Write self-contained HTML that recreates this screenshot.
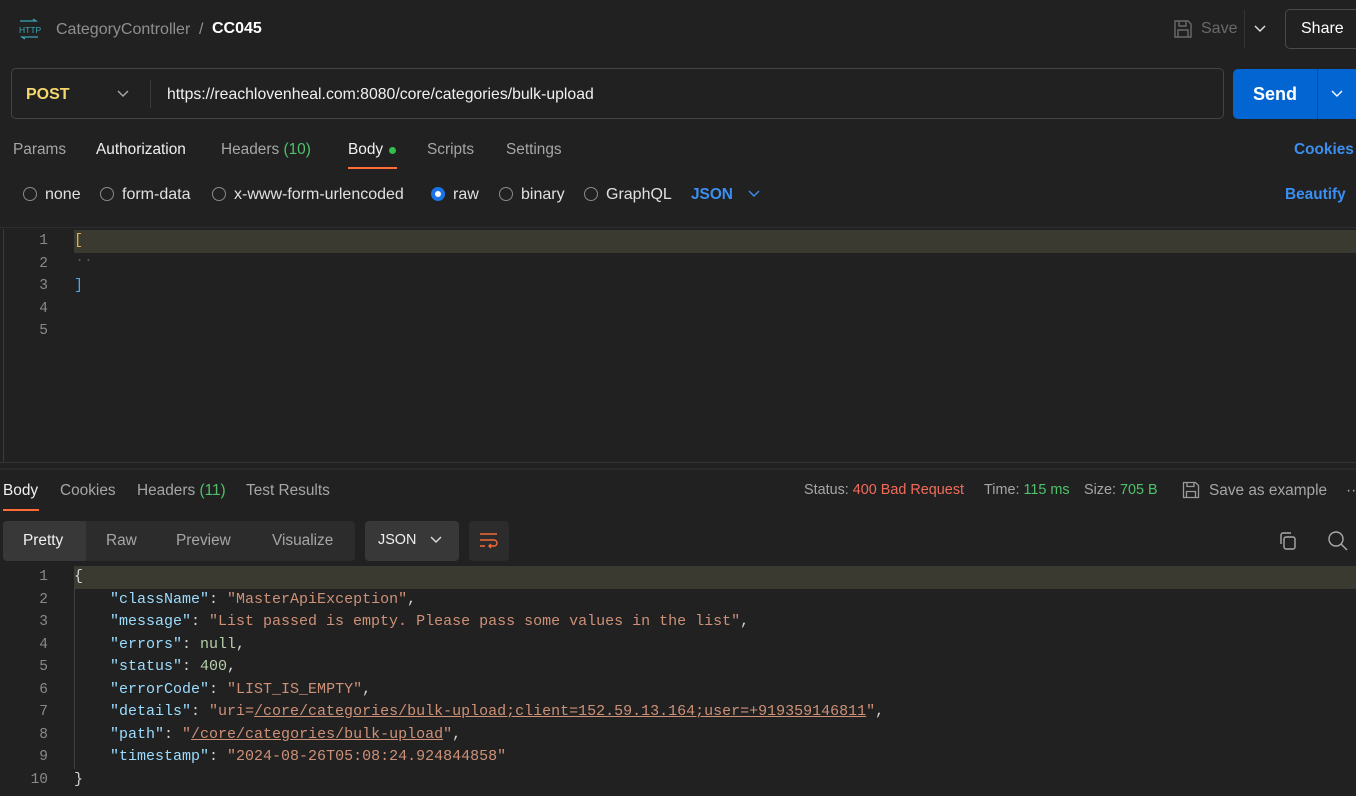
<!DOCTYPE html>
<html><head><meta charset="utf-8"><style>
*{box-sizing:border-box;margin:0;padding:0}
body{width:1356px;height:796px;background:#212121;font-family:"Liberation Sans",sans-serif;color:#e0e0e0;position:relative;overflow:hidden;font-size:15.4px}
.a{position:absolute;white-space:nowrap}
.g{color:#a6a6a6}
.mono{font-family:"Liberation Mono",monospace;font-size:15px}
.ln{position:absolute;width:48px;text-align:right;color:#8a8a8a;font-family:"Liberation Mono",monospace;font-size:14.5px}
.k{color:#9cdcfe}.s{color:#ce9178}.n{color:#b5cea8}.p{color:#d4d4d4}
.rd{font-size:16px}
.radio{display:inline-block;width:14px;height:14px;border:1px solid #8a8a8a;border-radius:50%;vertical-align:-2px;margin-right:8px}
</style></head><body>
<svg class="a" style="left:17px;top:18px" width="24" height="22" viewBox="0 0 24 22"><path d="M3 3h16l-3-2M21 19H5l3 2" stroke="#3aa6b9" fill="none" stroke-width="1.3"/><text x="2" y="15" font-size="8.5" fill="#3aa6b9" font-family="Liberation Sans">HTTP</text></svg>
<div class="a" style="left:56px;top:21px;font-size:16px;color:#8f8f8f">CategoryController</div>
<div class="a" style="left:199px;top:21px;font-size:16px;color:#8f8f8f">/</div>
<div class="a" style="left:212px;top:20px;font-size:16px;font-weight:bold;color:#fff">CC045</div>
<svg class="a" style="left:1173px;top:19px" width="20" height="20" viewBox="0 0 20 20"><path d="M2 2h13l3 3v13H2zM6 2v5h7V2M5 18v-7h10v7" stroke="#6a6a6a" fill="none" stroke-width="1.4"/></svg>
<div class="a" style="left:1201px;top:20px;font-size:16px;color:#6a6a6a">Save</div>
<div class="a" style="left:1244px;top:10px;width:1px;height:38px;background:#333"></div>
<svg class="a" style="left:1253px;top:24px" width="14" height="10"><path d="M2 2l5 5 5-5" stroke="#ddd" fill="none" stroke-width="1.5"/></svg>
<div class="a" style="left:1285px;top:9px;width:80px;height:40px;border:1px solid #4a4a4a;border-radius:5px"></div>
<div class="a" style="left:1301px;top:20px;font-size:16px;color:#fff">Share</div>
<div class="a" style="left:11px;top:68px;width:1213px;height:51px;border:1px solid #444;border-radius:5px"></div>
<div class="a" style="left:150px;top:80px;width:1px;height:28px;background:#3a3a3a"></div>
<div class="a" style="left:26px;top:86px;font-size:16px;font-weight:bold;color:#f5d76e">POST</div>
<svg class="a" style="left:116px;top:89px" width="14" height="10"><path d="M2 2l5 5 5-5" stroke="#aaa" fill="none" stroke-width="1.4"/></svg>
<div class="a" style="left:167px;top:86px;font-size:15.8px;color:#f0f0f0">https://reachlovenheal.com:8080/core/categories/bulk-upload</div>
<div class="a" style="left:1233px;top:69px;width:130px;height:50px;background:#0265d2;border-radius:5px"></div>
<div class="a" style="left:1317px;top:69px;width:1px;height:50px;background:#0150a8"></div>
<div class="a" style="left:1253px;top:84px;font-size:18px;font-weight:bold;color:#fff">Send</div>
<svg class="a" style="left:1330px;top:89px" width="14" height="10"><path d="M2 2l5 5 5-5" stroke="#fff" fill="none" stroke-width="1.4"/></svg>
<div class="a g" style="left:13px;top:141px">Params</div>
<div class="a" style="left:96px;top:141px;color:#f0f0f0">Authorization</div>
<div class="a g" style="left:221px;top:141px">Headers <span style="color:#4fc16d">(10)</span></div>
<div class="a" style="left:348px;top:141px;color:#f0f0f0">Body</div>
<div class="a" style="left:389px;top:147px;width:7px;height:7px;border-radius:50%;background:#2fbf4f"></div>
<div class="a" style="left:348px;top:167px;width:49px;height:2px;background:#ff6c37"></div>
<div class="a g" style="left:427px;top:141px">Scripts</div>
<div class="a g" style="left:506px;top:141px">Settings</div>
<div class="a" style="left:1294px;top:141px;color:#3b8ff0;font-weight:bold">Cookies</div>
<div class="a rd" style="left:23px;top:186px"><span class="radio"></span>none</div>
<div class="a rd" style="left:100px;top:186px"><span class="radio"></span>form-data</div>
<div class="a rd" style="left:212px;top:186px"><span class="radio"></span>x-www-form-urlencoded</div>
<div class="a rd" style="left:431px;top:186px"><span class="radio" style="border:4px solid #1a73e8;background:#fff"></span>raw</div>
<div class="a rd" style="left:499px;top:186px"><span class="radio"></span>binary</div>
<div class="a rd" style="left:584px;top:186px"><span class="radio"></span>GraphQL</div>
<div class="a" style="left:691px;top:186px;color:#3b8ff0;font-weight:bold">JSON</div>
<svg class="a" style="left:747px;top:189px" width="14" height="10"><path d="M2 2l5 5 5-5" stroke="#3b8ff0" fill="none" stroke-width="1.4"/></svg>
<div class="a" style="left:1285px;top:186px;color:#3b8ff0;font-weight:bold">Beautify</div>
<div class="a" style="left:0;top:227px;width:1356px;height:1px;background:#2e2e2e"></div>
<div class="a" style="left:3px;top:229px;width:1px;height:234px;background:#3a3a3a"></div>
<div class="a" style="left:0;top:462px;width:1356px;height:1px;background:#333"></div>
<div class="a" style="left:74px;top:230px;width:1282px;height:23px;background:#3b3a30"></div>
<div class="ln" style="left:0;top:233px">1</div>
<div class="ln" style="left:0;top:256px">2</div>
<div class="ln" style="left:0;top:278px">3</div>
<div class="ln" style="left:0;top:301px">4</div>
<div class="ln" style="left:0;top:323px">5</div>
<div class="a mono" style="left:74px;top:232px;color:#e0b040">[</div>
<div class="a mono" style="left:75px;top:252px;color:#555">··</div>
<div class="a mono" style="left:74px;top:277px;color:#4aa8e8">]</div>
<div class="a" style="left:0;top:468px;width:1356px;height:2px;background:#2a2a2a"></div>
<div class="a" style="left:3px;top:482px;color:#f0f0f0">Body</div>
<div class="a" style="left:3px;top:509px;width:36px;height:2px;background:#ff6c37"></div>
<div class="a g" style="left:60px;top:482px">Cookies</div>
<div class="a g" style="left:137px;top:482px">Headers <span style="color:#4fc16d">(11)</span></div>
<div class="a g" style="left:246px;top:482px">Test Results</div>
<div class="a g" style="left:804px;top:482px;font-size:14.4px">Status: <span style="color:#f26b5b">400 Bad Request</span></div>
<div class="a g" style="left:984px;top:482px;font-size:14.4px">Time: <span style="color:#4fc16d">115 ms</span></div>
<div class="a g" style="left:1084px;top:482px;font-size:14.4px">Size: <span style="color:#4fc16d">705 B</span></div>
<svg class="a" style="left:1182px;top:481px" width="18" height="18" viewBox="0 0 18 18"><path d="M1.5 1.5h12l3 3v12h-15zM5 1.5v4h7v-4M4.5 16.5v-6h9v6" stroke="#9a9a9a" fill="none" stroke-width="1.3"/></svg>
<div class="a g" style="left:1209px;top:482px">Save as example</div>
<div class="a g" style="left:1346px;top:482px">··</div>
<div class="a" style="left:3px;top:521px;width:352px;height:40px;background:#2c2c2c;border-radius:4px"></div>
<div class="a" style="left:3px;top:521px;width:83px;height:40px;background:#383838;border-radius:4px 0 0 4px"></div>
<div class="a" style="left:23px;top:532px;color:#f0f0f0">Pretty</div>
<div class="a g" style="left:106px;top:532px">Raw</div>
<div class="a g" style="left:176px;top:532px">Preview</div>
<div class="a g" style="left:272px;top:532px">Visualize</div>
<div class="a" style="left:365px;top:521px;width:94px;height:40px;background:#383838;border-radius:4px"></div>
<div class="a" style="left:378px;top:532px;font-size:14.4px;color:#f0f0f0">JSON</div>
<svg class="a" style="left:429px;top:535px" width="14" height="10"><path d="M2 2l5 5 5-5" stroke="#ddd" fill="none" stroke-width="1.4"/></svg>
<div class="a" style="left:469px;top:521px;width:40px;height:40px;background:#2c2c2c;border-radius:4px"></div>
<svg class="a" style="left:478px;top:530px" width="22" height="22" viewBox="0 0 22 22"><path d="M2 4h17M2 10h14a3 3 0 010 6h-5M13 14l-2 2 2 2M2 16h5" stroke="#f26b3a" fill="none" stroke-width="1.4"/></svg>
<svg class="a" style="left:1278px;top:531px" width="20" height="20" viewBox="0 0 20 20"><rect x="6" y="6" width="11" height="12" rx="2" stroke="#aaa" fill="none" stroke-width="1.4"/><path d="M3 13V4a2 2 0 012-2h8" stroke="#aaa" fill="none" stroke-width="1.4"/></svg>
<svg class="a" style="left:1327px;top:530px" width="22" height="22" viewBox="0 0 22 22"><circle cx="9" cy="9" r="7" stroke="#aaa" fill="none" stroke-width="1.4"/><path d="M14 14l6 6" stroke="#aaa" stroke-width="1.4"/></svg>
<div class="a" style="left:74px;top:566px;width:1282px;height:23px;background:#3b3a30"></div>
<div class="a" style="left:74px;top:589px;width:1px;height:180px;background:#404040"></div>
<div class="ln" style="left:0;top:569px">1</div>
<div class="ln" style="left:0;top:592px">2</div>
<div class="ln" style="left:0;top:614px">3</div>
<div class="ln" style="left:0;top:637px">4</div>
<div class="ln" style="left:0;top:659px">5</div>
<div class="ln" style="left:0;top:682px">6</div>
<div class="ln" style="left:0;top:704px">7</div>
<div class="ln" style="left:0;top:727px">8</div>
<div class="ln" style="left:0;top:749px">9</div>
<div class="ln" style="left:0;top:772px">10</div>
<div class="a mono p" style="left:74px;top:568px">{</div>
<div class="a mono p" style="left:110px;top:591px"><span class="k">"className"</span>: <span class="s">"MasterApiException"</span>,</div>
<div class="a mono p" style="left:110px;top:613px"><span class="k">"message"</span>: <span class="s">"List passed is empty. Please pass some values in the list"</span>,</div>
<div class="a mono p" style="left:110px;top:636px"><span class="k">"errors"</span>: <span class="n">null</span>,</div>
<div class="a mono p" style="left:110px;top:658px"><span class="k">"status"</span>: <span class="n">400</span>,</div>
<div class="a mono p" style="left:110px;top:681px"><span class="k">"errorCode"</span>: <span class="s">"LIST_IS_EMPTY"</span>,</div>
<div class="a mono p" style="left:110px;top:703px"><span class="k">"details"</span>: <span class="s">"uri=<u>/core/categories/bulk-upload;client=152.59.13.164;user=+919359146811</u>"</span>,</div>
<div class="a mono p" style="left:110px;top:726px"><span class="k">"path"</span>: <span class="s">"<u>/core/categories/bulk-upload</u>"</span>,</div>
<div class="a mono p" style="left:110px;top:748px"><span class="k">"timestamp"</span>: <span class="s">"2024-08-26T05:08:24.924844858"</span></div>
<div class="a mono p" style="left:74px;top:771px">}</div>
</body></html>
